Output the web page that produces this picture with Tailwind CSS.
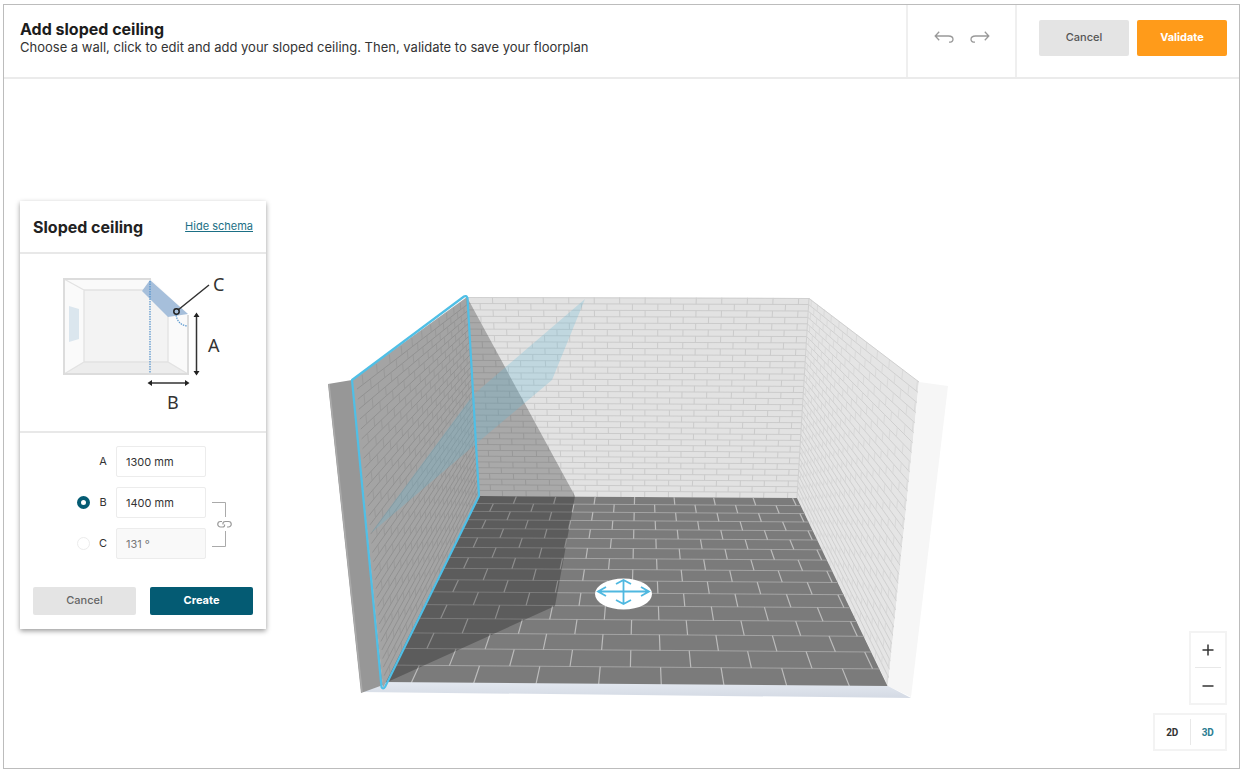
<!DOCTYPE html>
<html lang="en">
<head>
<meta charset="utf-8">
<meta name="viewport" content="width=device-width, initial-scale=1">
<title>Add sloped ceiling</title>
<script src="https://cdn.jsdelivr.net/npm/@tailwindcss/browser@4"></script>
</head>
<body class="flex min-h-screen bg-white px-[3px] py-1 font-['Inter',sans-serif] text-[#333]">
<div class="flex flex-1 flex-col border border-[#bcbcbc]">

  <header class="flex min-h-[74px] items-stretch border-b-2 border-[#ebebeb]">
    <div class="flex-1 pt-[15px] pl-4">
      <h1 class="text-base leading-[18px] font-bold text-[#1c1c1c]">Add sloped ceiling</h1>
      <p class="text-[13px] leading-[18px]">Choose a wall, click to edit and add your sloped ceiling. Then, validate to save your floorplan</p>
    </div>
    <div class="flex w-[111px] items-center justify-center gap-4 border-x-2 border-[#efefef] pb-2">
      <button type="button" aria-label="Undo">
        <svg class="h-3 w-5" viewBox="0 0 20 12" fill="none" stroke="#999" stroke-width="1.3"><path d="M5.2.8 1.2 5 5.2 9.2M1.4 5H14.5C17.500 5 19 6.300 19 8.200S17.500 11.200 15 11.200"/></svg>
      </button>
      <button type="button" aria-label="Redo">
        <svg class="h-3 w-5" viewBox="0 0 20 12" fill="none" stroke="#999" stroke-width="1.3"><path d="M14.800.8 18.800 5 14.800 9.200M18.600 5H5.500C2.500 5 1 6.300 1 8.200S2.500 11.200 5 11.200"/></svg>
      </button>
    </div>
    <div class="flex items-start gap-2 pt-[15px] pr-3 pl-[22px] text-[11px]">
      <button type="button" class="h-9 w-[90px] rounded-xs bg-[#e4e4e4] pb-[2px] font-medium text-[#555]">Cancel</button>
      <button type="button" class="h-9 w-[90px] rounded-xs bg-[#ff9b1a] pb-[2px] font-bold text-white">Validate</button>
    </div>
  </header>

  <main class="relative flex flex-1 items-start justify-between">
    <svg class="absolute inset-0 h-full w-full" viewBox="4 79 1235 689" role="img" aria-label="3D view of the room">
      <defs>
        <linearGradient id="sill" x1="0" y1="0" x2="0" y2="1"><stop offset="0" stop-color="#e3e8f0"/><stop offset="1" stop-color="#d4dae4"/></linearGradient>
      </defs>
      <polygon points="467,297 809,298 797,498 479,496" fill="#e2e2e2"/>
      <g fill="none" stroke="#cbcbcb"><path id="back-beds"/><path id="back-heads"/></g>
      <polygon points="809,298 919,382 888,686 797,498" fill="#e5e5e5"/>
      <g fill="none" stroke-width=".9"><path id="right-beds" stroke="#cdcdcd"/><path id="right-heads" stroke="#d8d8d8"/></g>
      <path d="M467 297.500 809 298.500 919 382" fill="none" stroke="#d0d0d0"/>
      <path d="M809 298 797 498" stroke="#cfcfcf" fill="none"/>
      <polygon points="919,382 948,386 911,697 888,686" fill="#f6f6f6"/>
      <polygon points="479,496 797,498 888,687 383,683" fill="#7b7b7b"/>
      <g fill="none"><path id="floor-beds" stroke="#a4a4a4"/><path id="floor-heads" stroke="#bcbcbc" stroke-width="1.200"/></g>
      <polygon points="383,682 888,686 911,698 361,692" fill="url(#sill)"/>
      <polygon points="468,299 575,496 555,606 383,684 479,496" fill="#000" fill-opacity=".25"/>
      <polygon points="328,384 352,380 383,685 361,693" fill="#979797"/>
      <path d="M329 384 362 692" stroke="#aaa" stroke-width="1.500"/>
      <polygon points="352,380 467,297 479,496 383,688" fill="#a4a4a4"/>
      <g fill="none" stroke-width=".9"><path id="left-beds" stroke="#8e8e8e"/><path id="left-heads" stroke="#979797"/></g>
      <polygon points="585,299 473,395 371,533 477,443 552,380" fill="#64bad8" fill-opacity=".27"/>
      <path d="M352 380 464 296.500Q466 295 467.500 298L479 496 385 687Q383 690 381.500 687Z" fill="none" stroke="#4fbfe6" stroke-width="2.200" stroke-linejoin="round"/>
      <ellipse cx="623.500" cy="594" rx="28.500" ry="15.500" fill="#fff"/>
      <path d="M598 591.500H649M606 587 598 591.500 606 596M641 587 649 591.500 641 596M623.500 580V604M616 584 623.500 580 631 584M616 600 623.500 604 631 600" fill="none" stroke="#4fb8e0" stroke-width="1.800"/>
    </svg>

    <aside class="relative mt-[122px] ml-4 w-[246px] bg-white shadow-[0_2px_5px_rgba(0,0,0,0.4)]">
      <div class="flex h-[53px] items-center justify-between border-b-2 border-[#e8e8e8] px-[13px]">
        <h2 class="text-base font-bold text-[#222]">Sloped ceiling</h2>
        <a href="#schema" class="text-[11px] text-[#1b6f85] underline">Hide schema</a>
      </div>

      <div id="schema" class="border-b-2 border-[#e8e8e8]">
        <svg class="block w-full" viewBox="20 254 246 177" role="img" aria-label="Dimensions A, B and C of a sloped ceiling">
          <polygon points="64,279 151,279 188,315 188,374 64,374" fill="#fafafa"/>
          <polygon points="84,290 144,290 168,316 168,362 84,362" fill="#f3f3f3"/>
          <polygon points="84,362 168,362 188,374 64,374" fill="#ededed"/>
          <path d="M84 290H144M84 290V362H168V316M64 279 84 290M64 374 84 362M188 374 168 362" fill="none" stroke="#e2e2e2" stroke-width="1.300"/>
          <path d="M188 315V374H64V279H151" fill="none" stroke="#dcdcdc" stroke-width="2"/>
          <polygon points="69,306 79,309 79,339 69,342" fill="#dbe6ee"/>
          <polygon points="150,280 188,314 168,317 142,291" fill="#a6bfdb"/>
          <path d="M150 281V373" stroke="#4f8fcb" stroke-width="1.200" stroke-dasharray="1.500 1"/>
          <path d="M176 315Q178 325 187 326" fill="none" stroke="#5f9bd0" stroke-width="1.300" stroke-dasharray="1.500 1"/>
          <path d="M178 310 209 285M196.500 315V373M150 383H187" fill="none" stroke="#333" stroke-width="1.500"/>
          <circle cx="176.500" cy="311.500" r="2.700" fill="none" stroke="#222" stroke-width="1.500"/>
          <path d="M196.500 312.500 199.500 317H193.500ZM196.500 375.500 199.500 371H193.500ZM147.500 383 152 380V386ZM189.500 383 185 380V386Z" fill="#222"/>
          <g font-family="'Noto Sans', sans-serif" font-size="18" fill="#333">
            <text x="213" y="291">C</text><text x="208" y="352">A</text><text x="167" y="409">B</text>
          </g>
        </svg>
      </div>

      <form class="px-[13px] pt-[13px] pb-[14px]">
        <div class="flex gap-[6px] pl-11">
          <div class="grid grid-cols-[13px_12px_90px] items-center gap-x-[7px] gap-y-[10px] text-[11px]">
            <span></span>
            <label for="size-a" class="text-center">A</label>
            <input id="size-a" value="1300 mm" class="h-[31px] w-full rounded-xs border border-[#ececec] bg-white px-[9px]">

            <input type="radio" name="driver" aria-label="Set B" checked class="size-[13px] appearance-none rounded-full border border-[#ececec] checked:border-4 checked:border-[#045b73]">
            <label for="size-b" class="text-center">B</label>
            <input id="size-b" value="1400 mm" class="h-[31px] w-full rounded-xs border border-[#ececec] bg-white px-[9px]">

            <input type="radio" name="driver" aria-label="Set C" class="size-[13px] appearance-none rounded-full border border-[#ececec] checked:border-4 checked:border-[#045b73]">
            <label for="size-c" class="text-center">C</label>
            <input id="size-c" value="131 °" readonly class="h-[31px] w-full rounded-xs border border-[#ececec] bg-[#f9f9f9] px-[9px] text-[#777]">
          </div>
          <svg class="mt-[55px] h-12 w-5" viewBox="0 0 20 48" fill="none" stroke="#aaa" aria-hidden="true">
            <path d="M0 1.500H13.500V16M0 45.500H13.500V30"/>
            <path d="M10 20.500H8.500A2.500 2.500 0 0 0 8.500 26H10.500Q13 26 12.500 23.500M15 26H16.500A2.500 2.500 0 0 0 16.500 20.500H13.500Q10.500 20.500 11 23.500" stroke="#999" stroke-width="1.200"/>
          </svg>
        </div>
        <div class="mt-7 grid grid-cols-2 gap-[14px] text-[11px]">
          <button type="button" class="h-7 rounded-xs bg-[#e4e4e4] pb-[2px] font-medium text-[#666]">Cancel</button>
          <button type="submit" class="h-7 rounded-xs bg-[#045b73] pb-[2px] font-bold text-white">Create</button>
        </div>
      </form>
    </aside>

    <div class="relative flex flex-col items-end gap-2 self-end pr-3 pb-[17px]">
      <div class="flex w-[38px] flex-col border-2 border-[#f3f3f3] bg-white px-1">
        <button type="button" aria-label="Zoom in" class="flex h-[35px] items-center justify-center border-b border-[#e8e8e8]">
          <svg class="size-3" viewBox="0 0 12 12" stroke="#333" stroke-width="1.500"><path d="M6 .5V11.500M.5 6H11.500"/></svg>
        </button>
        <button type="button" aria-label="Zoom out" class="flex h-[35px] items-center justify-center">
          <svg class="size-3" viewBox="0 0 12 12" stroke="#333" stroke-width="1.500"><path d="M.5 6H11.500"/></svg>
        </button>
      </div>
      <div class="flex h-[38px] w-[74px] border-2 border-[#f3f3f3] bg-white py-1 font-['Roboto',sans-serif] text-[10px] font-bold">
        <button type="button" class="flex-1 border-r border-[#e8e8e8]">2D</button>
        <button type="button" class="flex-1 text-[#2b7d92]">3D</button>
      </div>
    </div>
  </main>
</div>

<script>
// Maps the unit square onto a quad given as [top-left, top-right, bottom-right, bottom-left].
function projector([[x0, y0], [x1, y1], [x2, y2], [x3, y3]]) {
  const dx1 = x1 - x2, dx2 = x3 - x2, sx = x0 - x1 + x2 - x3;
  const dy1 = y1 - y2, dy2 = y3 - y2, sy = y0 - y1 + y2 - y3;
  const det = dx1 * dy2 - dx2 * dy1;
  const g = (sx * dy2 - dx2 * sy) / det, h = (dx1 * sy - sx * dy1) / det;
  const a = x1 - x0 + g * x1, b = x3 - x0 + h * x3;
  const d = y1 - y0 + g * y1, e = y3 - y0 + h * y3;
  return (u, v) => {
    const w = g * u + h * v + 1;
    return ((a * u + b * v + x0) / w).toFixed(1) + ' ' + ((d * u + e * v + y0) / w).toFixed(1);
  };
}
// Draws running-bond joints: `rows` courses, `cols` bricks wide, shifted by `offset` bricks.
function joints(surface, quad, rows, cols, offset) {
  const p = projector(quad);
  let beds = '', heads = '';
  for (let r = 0; r < rows; r++) {
    if (r) beds += 'M' + p(0, r / rows) + 'L' + p(1, r / rows);
    for (let c = offset + (r % 2 ? 0.5 : 0); c < cols; c++) {
      if (c > 0) heads += 'M' + p(c / cols, r / rows) + 'L' + p(c / cols, (r + 1) / rows);
    }
  }
  document.getElementById(surface + '-beds').setAttribute('d', beds);
  document.getElementById(surface + '-heads').setAttribute('d', heads);
}
joints('back', [[467, 297], [809, 298], [797, 498], [479, 496]], 33, 13.4, 0);
joints('left', [[356, 379], [467, 298], [479, 496], [385, 684]], 33, 11.5, 0.4);
joints('right', [[809, 298], [919, 382], [888, 686], [797, 498]], 33, 11.5, 0.4);
joints('floor', [[479, 496], [797, 498], [888, 687], [383, 683]], 16, 8.06, -0.05);
</script>
</body>
</html>
